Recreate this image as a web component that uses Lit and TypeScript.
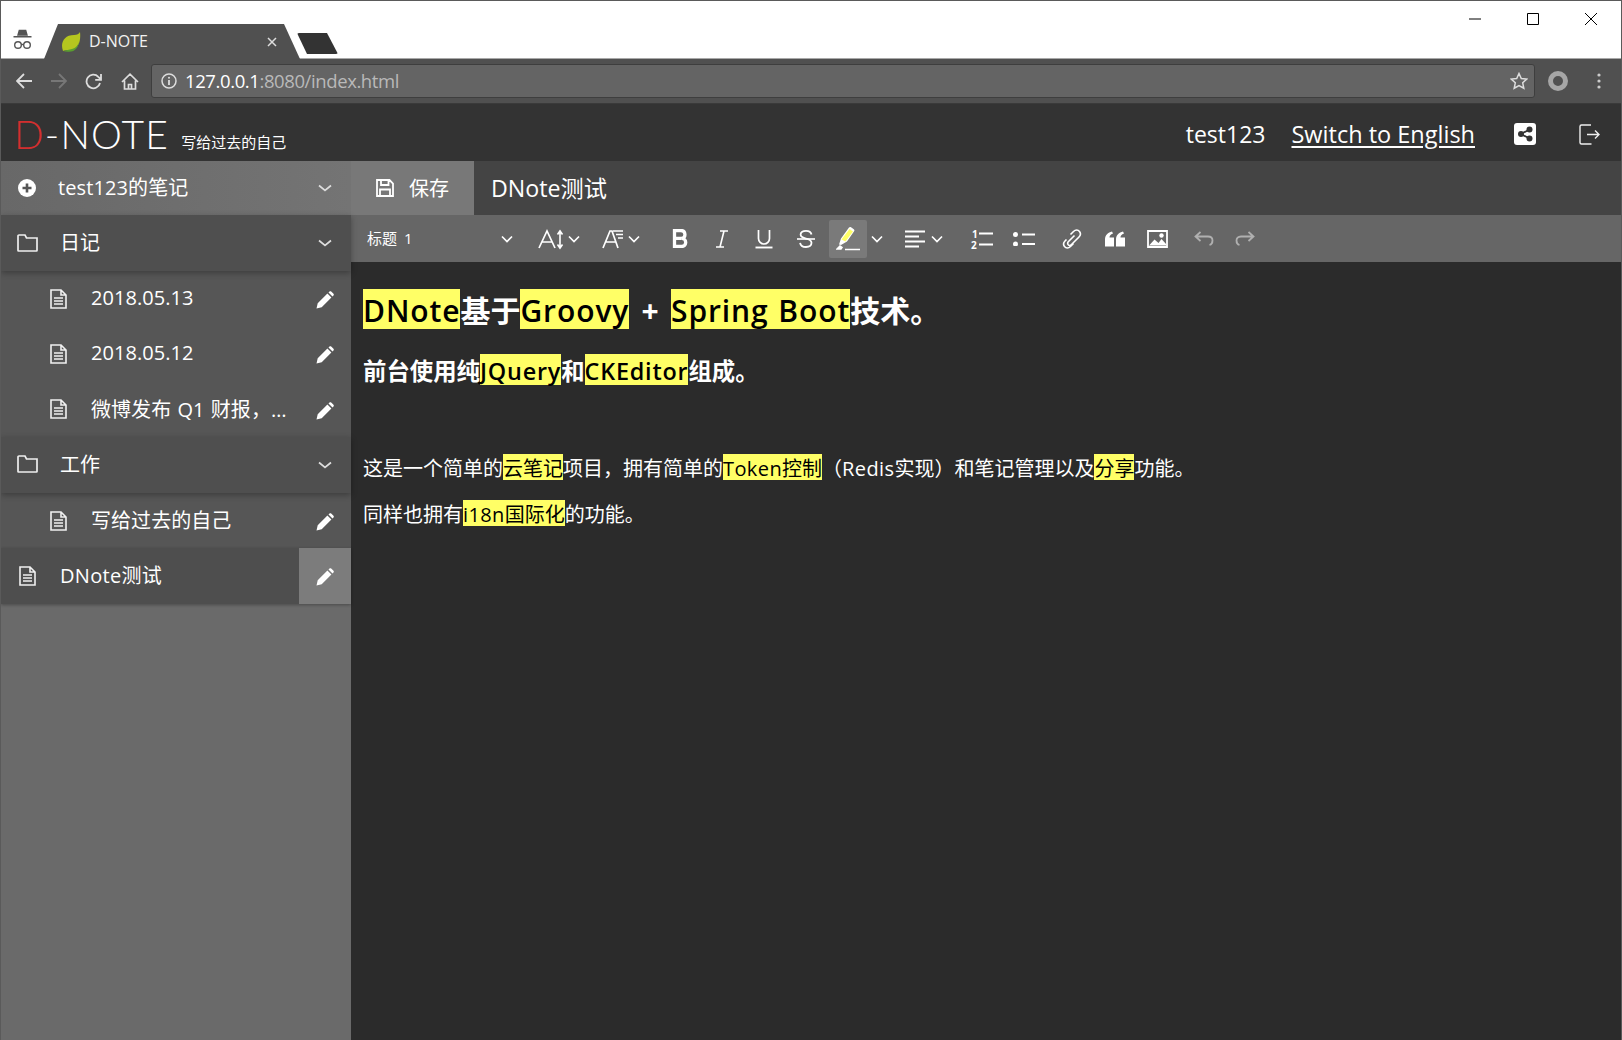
import { LitElement, html, css, svg } from "lit";
import { customElement } from "lit/decorators.js";

const icon = (w: number, h: number, body: unknown, cls = "") =>
  html`<svg class=${cls} width=${w} height=${h} viewBox="0 0 ${w} ${h}" fill="none">${body}</svg>`;

const chevron = (w = 12, color = "#fff") =>
  icon(w, 8, svg`<path d="M1 1.5l${(w - 2) / 2} ${5}l${(w - 2) / 2} -${5}" stroke=${color} stroke-width="1.7"/>`);

const pencil = () =>
  icon(18, 18, svg`<path d="M0.5 17.5l1.2-5.2L11.4 2.6l4 4L5.7 16.3z M12.5 1.5l1-1c.6-.5 1.2-.5 1.7 0l2.3 2.3c.5.5.5 1.1 0 1.7l-1 1z" fill="#fff"/>`, "pen");

const folder = () =>
  icon(21, 18, svg`<path d="M1 16.5V2a1 1 0 0 1 1-1h6l1.5 3H20v12.5a.5.5 0 0 1-.5.5h-18a.5.5 0 0 1-.5-.5zM9.5 4H13" stroke="#eee" stroke-width="1.7"/>`);

const doc = () =>
  icon(17, 20, svg`<path d="M1 19V1h10l5 5v13zM11 1v5h5M4 9h9M4 12h9M4 15h9" stroke="#f0f0f0" stroke-width="1.6"/>`);

const tools = {
  fontSize: icon(26, 22, svg`<path d="M1 20L9 3l8 17M4 14h10" stroke="#fff" stroke-width="1.7"/><path d="M22 4v15M19.5 6.5L22 3l2.5 3.5M19.5 16.5L22 20l2.5-3.5" stroke="#fff" stroke-width="1.6"/>`),
  lineHeight: icon(22, 22, svg`<path d="M1 20L8 3h2l6 17M4 14h10" stroke="#fff" stroke-width="1.7"/><path d="M11 3h10M14 6.5h7M16 10h5" stroke="#fff" stroke-width="1.5"/>`),
  bold: icon(17, 19, svg`<path d="M2.5 1.5h6.500a4 4 0 0 1 .8 7.900 4 4 0 0 1-.3 8.100H2.500zM2.500 9.400h7" stroke="#fff" stroke-width="3.300"/>`),
  italic: icon(14, 18, svg`<path d="M5 1h8M1 17h8M9 1L5 17" stroke="#fff" stroke-width="1.6"/>`),
  underline: icon(18, 20, svg`<path d="M3.5 1v8.5a5.5 5.5 0 0 0 11 0V1" stroke="#fff" stroke-width="1.7"/><path d="M0.5 18.5h17" stroke="#fff" stroke-width="1.9"/>`),
  strike: icon(18, 20, svg`<path d="M14.5 5.5C14 3 12 1.8 9 1.8 6 1.8 3.6 3 3.6 5.6c0 2.3 2 3.300 5.400 4 3.600.8 5.500 1.800 5.500 4.200 0 2.700-2.500 4.200-5.500 4.200-3.300 0-5.500-1.500-5.900-4.200" stroke="#fff" stroke-width="1.800"/><path d="M0 10h18" stroke="#fff" stroke-width="1.600"/>`),
  highlight: icon(24, 26, svg`<path d="M3 18.500l2-6L13 1.500c.7-.7 1.300-.7 2-.3l2.800 2c.7.500.8 1.200.3 2L11 15.500l-6 3.500z" fill="#fff"/><path d="M5.500 13.500L13.500 3l3.500 2.500-7.500 10z" fill="#ffff66"/><path d="M1 23l3-3 2 1.500-1 1.500zM9 23.500h15" fill="#fff" stroke="#fff" stroke-width="1.500"/>`),
  align: icon(20, 18, svg`<path d="M0 1.500h20M0 6.500h14M0 11.500h20M0 16.500h14" stroke="#fff" stroke-width="1.800"/>`),
  numbered: icon(22, 20, svg`<path d="M8 4.500h14M8 15.500h14" stroke="#fff" stroke-width="1.900"/>`),
  bullets: icon(22, 14, svg`<circle cx="2.500" cy="2.500" r="2.500" fill="#fff"/><circle cx="2.500" cy="12" r="2.500" fill="#fff"/><path d="M9 2.500h13M9 12h13" stroke="#fff" stroke-width="1.900"/>`),
  link: icon(20, 20, svg`<path d="M8.500 5.500l3-3c2-2 4.500-2 6 0s1 4-.5 5.500l-7.500 7.500c-1.500 1.500-3 1-3.500 0s-.5-2 .5-3l6-6M11.500 14.500l-3 3c-2 2-4.500 2-6 0s-1-4 .5-5.500l1.500-1.500" stroke="#fff" stroke-width="1.600"/>`),
  quote: icon(20, 16, svg`<path d="M0 15.500V8.500C0 4 3 1.500 7 .500l1 2c-2.500 1-3.500 2-3.500 4H9v9zM11 15.500V8.500C11 4 14 1.500 18 .500l1 2c-2.500 1-3.500 2-3.500 4H20v9z" fill="#fff"/>`),
  image: icon(21, 18, svg`<path d="M1 1h19v16H1z" stroke="#fff" stroke-width="1.800"/><path d="M2 15.500l5.500-6 4 3.500 3-4 4.500 5v1.500H2z" fill="#fff"/><circle cx="14.500" cy="5.500" r="2.200" fill="#fff"/>`),
  undo: icon(20, 15, svg`<path d="M6.500 1L1.500 5.500l5 4.500M2 5.500h12c3 0 4.500 2 4.500 4s-1 4-3 4.500" stroke="#b0b0b0" stroke-width="1.800"/>`),
  redo: icon(20, 15, svg`<path d="M13.500 1l5 4.500-5 4.500M18 5.500H6c-3 0-4.500 2-4.500 4s1 4 3 4.500" stroke="#b0b0b0" stroke-width="1.800"/>`),
};

@customElement("app-root")
export class AppRoot extends LitElement {
  static styles = css`
    :host {
      display: flex;
      flex-direction: column;
      box-sizing: border-box;
      height: 1040px;
      border: 1px solid #5a5a5a;
      border-bottom: 0;
      font-family: "Open Sans", "Noto Sans CJK SC", sans-serif;
      color: #fff;
      background: #2b2b2b;
      overflow: hidden;
    }
    svg { display: block; flex: none; }

    /* browser chrome */
    .titlebar { height: 58px; flex: none; background: #fff; display: flex; align-items: flex-end; position: relative; border-bottom: 1px solid #a8a8a8; box-sizing: border-box; }
    .incognito { width: 43px; align-self: flex-end; padding: 0 0 8px 12px; box-sizing: border-box; }
    .tab {
      width: 256px; height: 35px; background: #505050; flex: none;
      clip-path: polygon(0 100%, 14px 0, 240px 0, 256px 100%);
      display: flex; align-items: center; padding: 0 0 0 17px; box-sizing: border-box;
      font-size: 16px; color: #f2f2f2; margin-bottom: -1px;
    }
    .tab .name { margin-left: 8px; flex: 1; padding-bottom: 2px; }
    .tab svg:last-child { margin-right: 23px; }
    .newtab { width: 41px; height: 21px; background: #333; margin: 0 0 4px -3px; clip-path: polygon(0 0, 30px 0, 41px 100%, 10px 100%); border-radius: 2px; }
    .winctl { margin-left: auto; align-self: flex-start; display: flex; gap: 46px; padding: 12px 24px 0 0; }

    .navbar { height: 45px; flex: none; background: #505050; display: flex; align-items: center; border-bottom: 1px solid #3a3a3a; box-sizing: border-box; }
    .navbtns { display: flex; align-items: center; gap: 18.500px; padding-left: 15px; width: 150px; box-sizing: border-box; flex: none; }
    .omni { flex: 1; height: 34px; background: #646464; border: 1px solid #3e3e3e; border-radius: 3px; box-sizing: border-box; display: flex; align-items: center; padding: 0 6px 0 9px; }
    .url { margin-left: 8px; font: 18.500px "Open Sans", sans-serif; color: #b9b9b9; flex: 1; letter-spacing: -0.400px; padding-bottom: 2px; }
    .url b { font-weight: 400; color: #fff; }
    .profile { margin-left: 13px; }
    .dots { margin: 0 20px 0 29px; }

    /* app header */
    .header { height: 57px; flex: none; background: #333; display: flex; align-items: center; padding: 3px 21px 0 13px; box-sizing: border-box; }
    .logo { font: 300 39px Lato, sans-serif; line-height: 54px; letter-spacing: 1.200px; }
    .logo i { font-style: normal; color: #d32f2f; }
    .tagline { font-size: 15px; margin: 14px 0 0 12px; }
    .user { margin-left: auto; font-size: 23px; }
    .lang { margin-left: 26px; font-size: 23.500px; text-decoration: underline; text-underline-offset: 3px; }
    .share { margin-left: 39px; }
    .logout { margin-left: 43px; }

    /* body */
    .body { flex: 1; display: flex; min-height: 0; }
    .side { width: 350px; flex: none; background: #6a6a6a; }
    .row { display: flex; align-items: center; box-sizing: border-box; font-size: 20px; position: relative; }
    .row .label { flex: 1; white-space: nowrap; overflow: hidden; padding-bottom: 3px; }
    .row .end { width: 52px; align-self: stretch; display: flex; align-items: center; justify-content: center; flex: none; }
    .head { height: 54px; padding-left: 17px; background: linear-gradient(90deg, #686868, #747474); }
    .head > svg { margin-top: -1px; }
    .head .label { margin-left: 22px; letter-spacing: 0.100px; }
    .folder { height: 56px; padding-left: 16px; background: #4f4f4f; box-shadow: 0 2px 6px rgba(0, 0, 0, 0.3); z-index: 1; }
    .folder > svg { margin-top: -1px; }
    .folder .label { margin-left: 22px; }
    .note { height: 55.330px; padding-left: 49px; background: #565656; }
    .note .label { margin-left: 24px; padding-bottom: 2px; letter-spacing: 0.050px; word-spacing: 1px; }
    .note .pen { margin-top: 3px; }
    .note.active { padding-left: 18px; background: #4e4e4e; }
    .note.active .label { margin-left: 24px; padding-bottom: 3px; letter-spacing: 0.300px; }
    .note.active .end { background: #7c7c7c; }
    .note.active { box-shadow: 0 1px 3px rgba(0, 0, 0, 0.3); z-index: 1; }

    .main { flex: 1; display: flex; flex-direction: column; min-width: 0; }
    .titlerow { height: 54px; flex: none; background: #444; display: flex; align-items: center; }
    .save { width: 123px; height: 100%; background: #787878; display: flex; align-items: center; padding-left: 25px; box-sizing: border-box; font-size: 20px; }
    .save span { margin-left: 15px; padding-bottom: 2px; }
    .doc-title { margin-left: 17px; font-size: 23.200px; padding-bottom: 2px; }

    .toolbar { height: 47px; flex: none; background: #666; display: flex; align-items: center; }
    .style { width: 170px; display: flex; align-items: center; justify-content: space-between; padding: 0 8px 0 16px; box-sizing: border-box; font-size: 15px; word-spacing: 3px; }
    .style span { padding-bottom: 2px; }
    .group { display: flex; align-items: center; gap: 2px; }
    .g-font { margin-left: 13px; gap: 12px; }
    .g-text { margin-left: 14px; }
    .g-mark { margin-left: 3px; gap: 0; }
    .g-align { margin-left: 11px; }
    .g-list { margin-left: 12px; }
    .g-insert { margin-left: 8px; gap: 2.500px; }
    .g-hist { margin-left: 7px; gap: 1px; }
    .tool { width: 40px; height: 38px; display: flex; align-items: center; justify-content: center; }
    .tool.wide { width: 50px; gap: 4px; }
    .tool.align { width: 52px; gap: 6px; }
    .tool.mark { width: 38px; background: #7a7a7a; border-radius: 2px; }
    .tool.caret { width: 20px; }
    .ol { position: relative; }
    .ol small { position: absolute; left: 0; font: 700 10px "Open Sans", sans-serif; line-height: 10px; }
    .ol .n1 { top: 9px; left: 10px; }
    .ol .n2 { top: 20px; left: 9px; }

    .editor { flex: 1; background: #2b2b2b; padding: 27px 12px 0 12px; }
    h1, h2, p { margin: 0; white-space: nowrap; }
    mark { background: #ffff66; color: #000; display: inline-block; }
    .l { letter-spacing: 0.400px; }
    h1 { font-size: 30px; font-weight: 700; line-height: 36px; word-spacing: 4.500px; }
    h1 mark { line-height: 36px; padding-top: 4px; font-weight: 600; letter-spacing: 0.900px; word-spacing: 1px; }
    h2 { font-size: 23.400px; font-weight: 700; line-height: 27px; margin-top: 25px; }
    h2 mark { line-height: 27px; padding-top: 4px; font-weight: 600; letter-spacing: 0.800px; }
    p { font-size: 20px; line-height: 23px; }
    p mark { line-height: 23px; padding-top: 3px; }
    .p1 { margin-top: 69px; }
    .p2 { margin-top: 20px; }
  `;

  render() {
    return html`
      <div class="titlebar">
        <div class="incognito">
          ${icon(19, 21, svg`<path d="M5 6l1.300-4.500h6.400L14 6z M0.500 7.800h18" fill="#555" stroke="#555" stroke-width="1.400"/><circle cx="5" cy="16" r="3.300" stroke="#555" stroke-width="1.400"/><circle cx="14" cy="16" r="3.300" stroke="#555" stroke-width="1.400"/><path d="M8 15.500h3" stroke="#555" stroke-width="1.400"/>`)}
        </div>
        <div class="tab">
          ${icon(20, 20, svg`<path d="M2 19C-1 11 3 3 13 3c3 0 5-1 6-3 1 8-1 17-9 18-3 .5-6 0-8 1z" fill="#b5c61f"/><path d="M2 19c3-1 6-1 9-2 4-1 6-4 7-7-1 6-4 9-8 9.500-3 .300-5 .500-8-.500z" fill="#5a9e2f"/>`)}
          <span class="name">D-NOTE</span>
          ${icon(10, 10, svg`<path d="M1 1l8 8M9 1l-8 8" stroke="#ddd" stroke-width="1.500"/>`)}
        </div>
        <div class="newtab"></div>
        <div class="winctl">
          ${icon(12, 12, svg`<path d="M0 6h12" stroke="#000"/>`)}
          ${icon(12, 12, svg`<path d="M.5 .5h11v11H.5z" stroke="#000"/>`)}
          ${icon(12, 12, svg`<path d="M0 0l12 12M12 0L0 12" stroke="#000"/>`)}
        </div>
      </div>

      <div class="navbar">
        <div class="navbtns">
          ${icon(16, 16, svg`<path d="M8 1L1 8l7 7M1 8h15" stroke="#ddd" stroke-width="1.800"/>`)}
          ${icon(16, 16, svg`<path d="M8 1l7 7-7 7M15 8H0" stroke="#777" stroke-width="1.800"/>`)}
          ${icon(17, 17, svg`<path d="M15 10A6.800 6.800 0 1 1 13.300 3.800L16 6.500M16 1v5.800h-5.800" stroke="#ddd" stroke-width="1.800"/>`)}
          ${icon(18, 17, svg`<path d="M1 9L9 1.200 17 9M3.500 7.500v8.500h11V7.500M7.500 16v-4.500h3V16" stroke="#ddd" stroke-width="1.700"/>`)}
        </div>
        <div class="omni">
          ${icon(16, 16, svg`<circle cx="8" cy="8" r="7" stroke="#ddd" stroke-width="1.500"/><path d="M8 7v5" stroke="#ddd" stroke-width="1.800"/><circle cx="8" cy="4.700" r="1" fill="#ddd"/>`)}
          <span class="url"><b>127.0.0.1</b>:8080/index.html</span>
          ${icon(18, 18, svg`<path d="M9 1.500l2.300 5 5.400.6-4 3.700 1.100 5.400L9 13.500l-4.800 2.700 1.100-5.400-4-3.700 5.400-.6z" stroke="#ddd" stroke-width="1.500"/>`)}
        </div>
        <div class="profile">
          ${icon(20, 20, svg`<circle cx="10" cy="10" r="7.500" stroke="#a6a6a6" stroke-width="5"/>`)}
        </div>
        <div class="dots">
          ${icon(4, 16, svg`<circle cx="2" cy="2" r="1.600" fill="#ccc"/><circle cx="2" cy="8" r="1.600" fill="#ccc"/><circle cx="2" cy="14" r="1.600" fill="#ccc"/>`)}
        </div>
      </div>

      <div class="header">
        <span class="logo"><i>D</i>-NOTE</span>
        <span class="tagline">写给过去的自己</span>
        <span class="user">test123</span>
        <span class="lang">Switch to English</span>
        <span class="share">
          ${icon(22, 22, svg`<rect width="22" height="22" rx="3" fill="#fff"/><path d="M15.500 6.500L7 11l8.500 4.500" stroke="#333" stroke-width="1.800"/><circle cx="15.500" cy="6.500" r="3" fill="#333"/><circle cx="7" cy="11" r="3" fill="#333"/><circle cx="15.500" cy="15.500" r="3" fill="#333"/>`)}
        </span>
        <span class="logout">
          ${icon(21, 21, svg`<path d="M12 1H2.500A1.500 1.500 0 0 0 1 2.500v16A1.500 1.500 0 0 0 2.500 20H12.500M8 10.500h12M16 6.500l4 4-4 4" stroke="#eee" stroke-width="1.400"/>`)}
        </span>
      </div>

      <div class="body">
        <nav class="side">
          <div class="row head">
            ${icon(18, 18, svg`<circle cx="9" cy="9" r="9" fill="#fff"/><path d="M9 4.500v9M4.500 9h9" stroke="#555" stroke-width="2.600"/>`)}
            <span class="label">test123的笔记</span>
            <span class="end">${chevron(14, "#ddd")}</span>
          </div>
          ${this.folderRow("日记")}
          ${this.noteRow("2018.05.13")}
          ${this.noteRow("2018.05.12")}
          ${this.noteRow("微博发布 Q1 财报，…")}
          ${this.folderRow("工作")}
          ${this.noteRow("写给过去的自己")}
          <div class="row note active">
            ${doc()}
            <span class="label">DNote测试</span>
            <span class="end">${pencil()}</span>
          </div>
        </nav>

        <section class="main">
          <div class="titlerow">
            <div class="save">
              ${icon(18, 18, svg`<path d="M1 1h12.500L17 4.500V17H1zM5 1v5h7.500V1M4 17v-6.500h10V17" stroke="#fff" stroke-width="1.800"/>`)}
              <span>保存</span>
            </div>
            <div class="doc-title">DNote测试</div>
          </div>

          <div class="toolbar">
            <div class="style"><span>标题 1</span>${chevron()}</div>
            <div class="group g-font">
              <div class="tool wide">${tools.fontSize}${chevron()}</div>
              <div class="tool wide">${tools.lineHeight}${chevron()}</div>
            </div>
            <div class="group g-text">
              <div class="tool">${tools.bold}</div>
              <div class="tool">${tools.italic}</div>
              <div class="tool">${tools.underline}</div>
              <div class="tool">${tools.strike}</div>
            </div>
            <div class="group g-mark">
              <div class="tool mark">${tools.highlight}</div>
              <div class="tool caret">${chevron()}</div>
            </div>
            <div class="group g-align">
              <div class="tool align">${tools.align}${chevron()}</div>
            </div>
            <div class="group g-list">
              <div class="tool ol">
                <small class="n1">1</small>
                <small class="n2">2</small>
                ${tools.numbered}
              </div>
              <div class="tool">${tools.bullets}</div>
            </div>
            <div class="group g-insert">
              <div class="tool">${tools.link}</div>
              <div class="tool">${tools.quote}</div>
              <div class="tool">${tools.image}</div>
            </div>
            <div class="group g-hist">
              <div class="tool">${tools.undo}</div>
              <div class="tool">${tools.redo}</div>
            </div>
          </div>

          <article class="editor">
            <h1><mark>DNote</mark>基于<mark>Groovy</mark> + <mark>Spring Boot</mark>技术。</h1>
            <h2>前台使用纯<mark>JQuery</mark>和<mark>CKEditor</mark>组成。</h2>
            <p class="p1">这是一个简单的<mark>云笔记</mark>项目，拥有简单的<mark><span class="l">Token</span>控制</mark>（<span class="l">Redis</span>实现）和笔记管理以及<mark>分享</mark>功能。</p>
            <p class="p2">同样也拥有<mark><span class="l">i18n</span>国际化</mark>的功能。</p>
          </article>
        </section>
      </div>
    `;
  }

  folderRow(name: string) {
    return html`<div class="row folder">
      ${folder()}
      <span class="label">${name}</span>
      <span class="end">${chevron(14, "#ddd")}</span>
    </div>`;
  }

  noteRow(name: string) {
    return html`<div class="row note">
      ${doc()}
      <span class="label">${name}</span>
      <span class="end">${pencil()}</span>
    </div>`;
  }
}
